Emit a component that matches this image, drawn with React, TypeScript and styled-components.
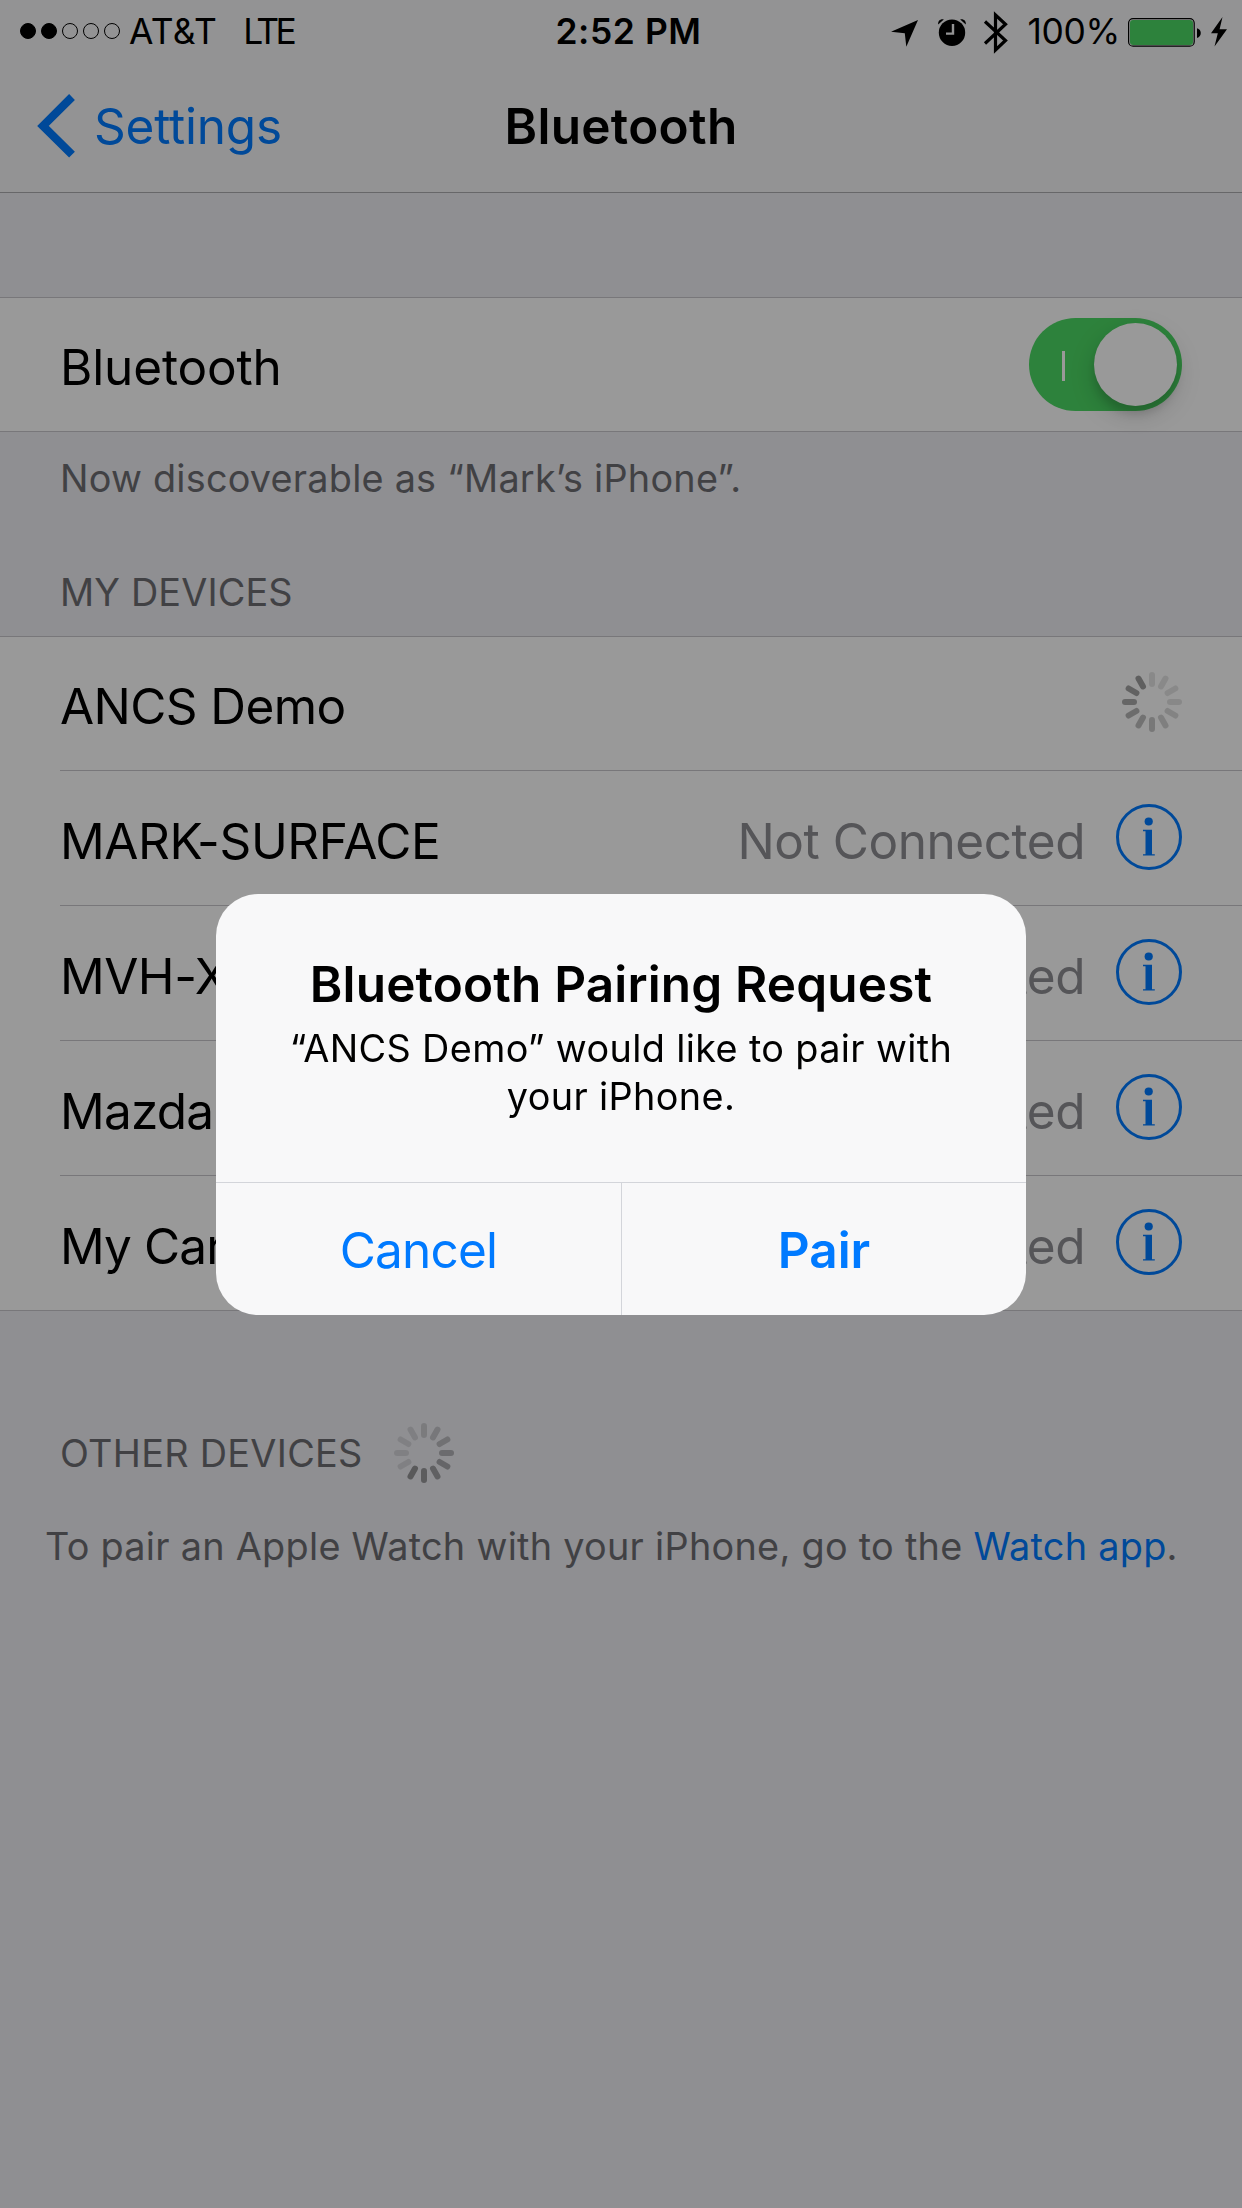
import React from "react";
import styled, { createGlobalStyle } from "styled-components";

const GlobalStyle = createGlobalStyle`
  * { box-sizing: border-box; }
  body {
    margin: 0;
    background: #efeff4;
    color: #000;
    font-family: Inter, "Liberation Sans", sans-serif;
  }
`;

const Screen = styled.div`
  width: 1242px;
  height: 2208px;
  overflow: hidden;
  display: flex;
  flex-direction: column;
  background: #efeff4;
  font-size: 49.5px;
  white-space: nowrap;
`;

const TopBar = styled.header`
  height: 193px;
  background: #f6f6f7;
  border-bottom: 1px solid #acacb0;
`;

const StatusBar = styled.div`
  height: 60px;
  padding: 1px 15px 0 20px;
  display: grid;
  grid-template-columns: 1fr auto 1fr;
  align-items: center;
  font-size: 35.4px;
  line-height: 60px;
`;

const Carrier = styled.div`
  display: flex;
  align-items: center;
`;

const Signal = styled.div`
  display: flex;
  gap: 5px;
  margin: -2px 9px 0 0;
`;

const Dot = styled.i<{ $on?: boolean }>`
  width: 16px;
  height: 16px;
  border-radius: 50%;
  border: 1px solid #000;
  background: ${(p) => (p.$on ? "#000" : "transparent")};
`;

const Label = styled.span<{ $track?: number; $gap?: number }>`
  letter-spacing: ${(p) => p.$track ?? 0}px;
  margin-left: ${(p) => p.$gap ?? 0}px;
  padding-top: 1px;
`;

const Clock = styled.div`
  margin-left: 10px;
  padding-top: 1px;
  font-weight: 600;
  letter-spacing: 0.6px;
`;

const StatusIcons = styled.div`
  display: flex;
  justify-content: flex-end;
  align-items: center;
  svg { display: block; }
`;

const BatterySlot = styled.span`
  margin-left: 7px;
`;

const NavBar = styled.nav`
  height: 132px;
  display: grid;
  grid-template-columns: 1fr auto 1fr;
  align-items: center;
  line-height: 60px;
`;

const Back = styled.a`
  display: flex;
  align-items: center;
  gap: 16px;
  padding-left: 36px;
  color: #007aff;
  letter-spacing: -0.2px;
`;

const NavTitle = styled.h1`
  margin: 0;
  font-size: 49.5px;
  font-weight: 600;
  letter-spacing: 0.3px;
`;

const Group = styled.section<{ $top?: number }>`
  margin-top: ${(p) => p.$top ?? 0}px;
  background: #fff;
  border-top: 1px solid #c8c7cc;
  border-bottom: 1px solid #c8c7cc;
`;

const Row = styled.div`
  height: 135px;
  margin-left: 60px;
  padding-right: 60px;
  display: flex;
  align-items: center;
  border-top: 1px solid #c8c7cc;
  &:first-child {
    height: 133px;
    border-top: 0;
  }
`;

const RowText = styled.span<{ $track?: number }>`
  flex: 1;
  padding-top: 5px;
  line-height: 60px;
  letter-spacing: ${(p) => p.$track ?? 0}px;
`;

const Detail = styled.span`
  padding-top: 5px;
  margin-right: 31px;
  line-height: 60px;
  color: #8e8e93;
  letter-spacing: -0.46px;
`;

const Accessory = styled.span`
  display: flex;
  margin-top: -3px;
`;

const Switch = styled.div`
  width: 153px;
  height: 93px;
  border-radius: 47px;
  padding: 0 5px 0 33px;
  display: flex;
  align-items: center;
  justify-content: space-between;
  background: #4cd964;
`;

const SwitchMark = styled.i`
  width: 3px;
  height: 30px;
  margin-top: 3px;
  background: #fff;
`;

const Knob = styled.i`
  width: 83px;
  height: 83px;
  border-radius: 50%;
  background: #fff;
  box-shadow: 0 9px 26px rgba(0, 0, 0, 0.16), 0 8px 8px rgba(0, 0, 0, 0.12);
`;

const Note = styled.p<{ $top: number; $left?: number; $track?: number }>`
  margin: ${(p) => p.$top}px 0 0;
  padding-left: ${(p) => p.$left ?? 60}px;
  height: 46px;
  line-height: 46px;
  display: flex;
  align-items: center;
  font-size: 37.8px;
  color: #6d6d72;
  letter-spacing: ${(p) => p.$track ?? 0}px;
  white-space: pre;
`;

const Link = styled.a`
  color: #007aff;
`;

const SpinnerSlot = styled.span`
  display: flex;
  margin-left: 31px;
`;

const Scrim = styled.div`
  position: fixed;
  inset: 0;
  width: 1242px;
  height: 2208px;
  display: flex;
  align-items: center;
  justify-content: center;
  padding-top: 1px;
  background: rgba(0, 0, 0, 0.4);
`;

const Dialog = styled.div`
  width: 810px;
  height: 421px;
  border-radius: 42px;
  overflow: hidden;
  display: flex;
  flex-direction: column;
  background: #f8f8f9;
  text-align: center;
`;

const DialogBody = styled.div`
  flex: 1;
  padding-top: 60px;
`;

const DialogTitle = styled.h2`
  margin: 0;
  font-size: 49.5px;
  line-height: 60px;
  font-weight: 600;
  letter-spacing: 0.15px;
`;

const DialogText = styled.p`
  margin: 10px 0 0;
  font-size: 37.8px;
  line-height: 48px;
  letter-spacing: 0.37px;
`;

const Actions = styled.div`
  height: 133px;
  display: grid;
  grid-template-columns: 405px 1fr;
  border-top: 1px solid #d3d5da;
`;

const Action = styled.button<{ $strong?: boolean; $track?: number }>`
  border: 0;
  border-left: ${(p) => (p.$strong ? "1px solid #d3d5da" : "0")};
  padding: 2px 0 0;
  background: none;
  color: #007aff;
  font-family: inherit;
  font-size: 49.5px;
  line-height: 60px;
  font-weight: ${(p) => (p.$strong ? 600 : 400)};
  letter-spacing: ${(p) => p.$track ?? 0}px;
`;

const TRAIL = [0.38, 0.36, 0.33, 0.29, 0.25, 0.21, 0.17, 0.14, 0.11, 0.1, 0.1, 0.1];

/* Twelve spokes; `lead` is the index of the darkest one, fading counter-clockwise. */
function Spinner({ lead }: { lead: number }) {
  return (
    <svg width="60" height="60" viewBox="-30 -30 60 60">
      {TRAIL.map((alpha, i) => (
        <rect
          key={i}
          x="-3"
          y="-30"
          width="6"
          height="15"
          rx="3"
          fill="#000"
          fillOpacity={alpha}
          transform={`rotate(${(lead - i) * 30})`}
        />
      ))}
    </svg>
  );
}

function InfoIcon() {
  return (
    <svg width="66" height="66" viewBox="0 0 66 66">
      <circle cx="33" cy="33" r="31.5" fill="none" stroke="#007aff" strokeWidth="3" />
      <circle cx="32.7" cy="17.5" r="4.1" fill="#007aff" />
      <path d="M27 25.8H36V50.2H38.8V51.6H27V50.2H29.5V27.2H27Z" fill="#007aff" />
    </svg>
  );
}

function StatusGlyphs() {
  return (
    <svg width="120" height="60" viewBox="888 0 120 60">
      <path d="M891 29.8L918 18L906.3 44.8L904.8 31.2Z" />
      <circle cx="952" cy="30.7" r="13.2" />
      <path d="M938.2 22.6C937.6 19 940.4 16.6 943.8 17.4Z M965.8 22.6C966.4 19 963.6 16.6 960.2 17.4Z" />
      <path d="M953 22V31.6H946" fill="none" stroke="#f6f6f7" strokeWidth="2.4" />
      <path
        d="M985 19.5L1005.5 38.5L995.5 48V13L1005.5 22.2L985 41.5"
        fill="none"
        stroke="#000"
        strokeWidth="3.2"
      />
    </svg>
  );
}

function Battery() {
  return (
    <svg width="100" height="60" viewBox="1127 0 100 60">
      <rect x="1128.6" y="16.6" width="65.6" height="27.6" rx="4.5" fill="none" stroke="#000" strokeWidth="1.2" />
      <rect x="1130" y="18" width="63" height="25" rx="3" fill="#4cd964" />
      <path d="M1197 26.2C1202 27.5 1202 34.5 1197 36Z" />
      <path d="M1222.5 15L1211 31.2H1217.8L1214.5 44.5L1227 27.2H1219.6Z" />
    </svg>
  );
}

const DEVICES = [
  { name: "MARK-SURFACE", track: -0.38 },
  { name: "MVH-X", track: -0.5 },
  { name: "Mazda", track: -0.8 },
  { name: "My Car", track: -0.9 },
];

export default function App() {
  return (
    <>
      <GlobalStyle />
      <Screen>
        <TopBar>
          <StatusBar>
            <Carrier>
              <Signal>
                <Dot $on />
                <Dot $on />
                <Dot />
                <Dot />
                <Dot />
              </Signal>
              <Label $track={0.4}>AT&amp;T</Label>
              <Label $gap={26} $track={-3.6}>LTE</Label>
            </Carrier>
            <Clock>2:52 PM</Clock>
            <StatusIcons>
              <StatusGlyphs />
              <Label $gap={19} $track={-0.3}>100%</Label>
              <BatterySlot>
                <Battery />
              </BatterySlot>
            </StatusIcons>
          </StatusBar>
          <NavBar>
            <Back>
              <svg width="42" height="64" viewBox="36 94.5 42 64">
                <path d="M72 97.5L43 126.4L72 155.2" fill="none" stroke="#007aff" strokeWidth="8.2" />
              </svg>
              Settings
            </Back>
            <NavTitle>Bluetooth</NavTitle>
          </NavBar>
        </TopBar>

        <Group $top={104}>
          <Row>
            <RowText $track={-0.15}>Bluetooth</RowText>
            <Switch>
              <SwitchMark />
              <Knob />
            </Switch>
          </Row>
        </Group>
        <Note $top={23} $track={0.23}>
          Now discoverable as “Mark’s iPhone”.
        </Note>
        <Note $top={68} $track={0.15}>
          MY DEVICES
        </Note>

        <Group $top={21}>
          <Row>
            <RowText $track={-0.6}>ANCS Demo</RowText>
            <Accessory>
              <Spinner lead={11} />
            </Accessory>
          </Row>
          {DEVICES.map((d) => (
            <Row key={d.name}>
              <RowText $track={d.track}>{d.name}</RowText>
              <Detail>Not Connected</Detail>
              <Accessory>
                <InfoIcon />
              </Accessory>
            </Row>
          ))}
        </Group>

        <Note $top={119} $track={0.3}>
          OTHER DEVICES
          <SpinnerSlot>
            <Spinner lead={7} />
          </SpinnerSlot>
        </Note>
        <Note $top={47} $left={45} $track={0.28}>
          To pair an Apple Watch with your iPhone, go to the <Link>Watch app</Link>.
        </Note>
      </Screen>

      <Scrim>
        <Dialog role="dialog">
          <DialogBody>
            <DialogTitle>Bluetooth Pairing Request</DialogTitle>
            <DialogText>
              “ANCS Demo” would like to pair with
              <br />
              your iPhone.
            </DialogText>
          </DialogBody>
          <Actions>
            <Action $track={-0.8}>Cancel</Action>
            <Action $strong>Pair</Action>
          </Actions>
        </Dialog>
      </Scrim>
    </>
  );
}
